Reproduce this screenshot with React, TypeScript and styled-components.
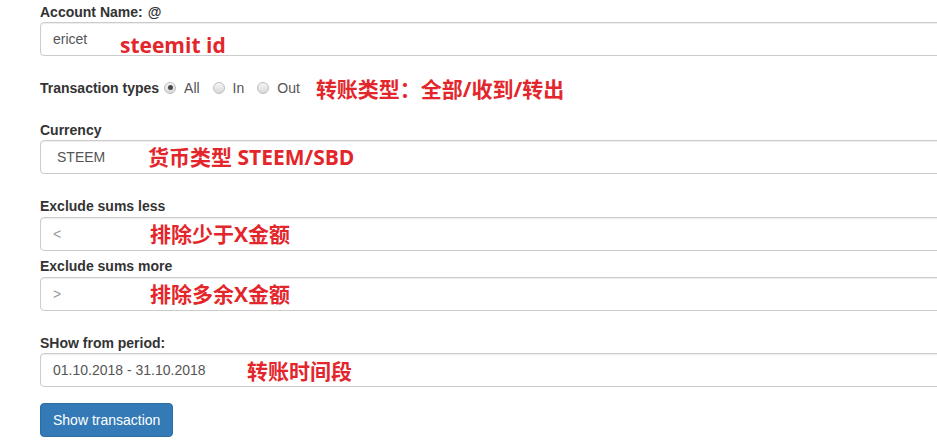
import React from "react";
import styled, { createGlobalStyle } from "styled-components";

const GlobalStyle = createGlobalStyle`
  html, body {
    margin: 0;
    padding: 0;
    background: #fff;
    overflow: hidden;
  }
  body {
    font-family: "Liberation Sans", Arial, sans-serif;
    color: #333;
  }
`;

const Page = styled.form`
  width: 960px;
  box-sizing: border-box;
  padding: 3px 0 0 40px;
  display: flex;
  flex-direction: column;
`;

const Group = styled.div<{ $mt: number }>`
  margin-top: ${(p) => p.$mt}px;
  display: flex;
  flex-direction: column;
`;

const Label = styled.label<{ $mb?: number }>`
  display: block;
  font-size: 14px;
  font-weight: 700;
  line-height: 19px;
  color: #333;
  margin-bottom: ${(p) => p.$mb ?? 0}px;
`;

const At = styled.span`
  margin-left: 5px;
`;

const Field = styled.div`
  position: relative;
`;

const TextInput = styled.input`
  display: block;
  width: 100%;
  height: 34px;
  box-sizing: border-box;
  margin: 0;
  padding: 6px 12px;
  font-family: "Liberation Sans", Arial, sans-serif;
  font-size: 14px;
  line-height: 20px;
  color: #555;
  background: #fff;
  border: 1px solid #ccc;
  border-radius: 4px;
  box-shadow: inset 0 1px 1px rgba(0, 0, 0, 0.075);
  outline: none;
  &::placeholder {
    color: #999;
  }
`;

const Select = styled.select`
  display: block;
  width: 100%;
  height: 34px;
  box-sizing: border-box;
  margin: 0;
  padding: 6px 12px 6px 16px;
  font-family: "Liberation Sans", Arial, sans-serif;
  font-size: 14px;
  line-height: 20px;
  color: #555;
  background: #fff;
  border: 1px solid #ccc;
  border-radius: 4px;
  box-shadow: inset 0 1px 1px rgba(0, 0, 0, 0.075);
  appearance: none;
  outline: none;
`;

const Note = styled.span<{ $left?: number; $top?: number }>`
  position: absolute;
  left: ${(p) => p.$left ?? 0}px;
  top: ${(p) => p.$top ?? 0}px;
  font-family: "Open Sans", "Noto Sans CJK SC", sans-serif;
  font-size: 21px;
  font-weight: 700;
  line-height: 24px;
  color: #e3262b;
  white-space: nowrap;
  pointer-events: none;
`;

const InlineNote = styled.span`
  margin-left: 16px;
  font-family: "Open Sans", "Noto Sans CJK SC", sans-serif;
  font-size: 21px;
  font-weight: 700;
  line-height: 19px;
  color: #e3262b;
  white-space: nowrap;
  position: relative;
  top: 1px;
`;

const RadioRow = styled.div`
  margin-top: 23px;
  height: 19px;
  display: flex;
  align-items: center;
`;

const RowLabel = styled.span`
  font-size: 14px;
  font-weight: 700;
  line-height: 19px;
  color: #333;
`;

const Option = styled.label<{ $first?: boolean }>`
  display: flex;
  align-items: center;
  margin-left: ${(p) => (p.$first ? 5 : 13)}px;
  font-size: 14px;
  line-height: 19px;
  color: #555;
`;

const Radio = styled.input`
  appearance: none;
  width: 12px;
  height: 12px;
  margin: 0 8px 0 0;
  box-sizing: border-box;
  border: 1px solid #bdbdbd;
  border-radius: 50%;
  background: linear-gradient(#f6f6f6, #d9d9d9);
  display: grid;
  place-items: center;
  position: relative;
  top: -1px;
  &:checked::after {
    content: "";
    width: 5px;
    height: 5px;
    border-radius: 50%;
    background: #4a4a4a;
  }
`;

const Button = styled.button`
  align-self: flex-start;
  margin-top: 16px;
  height: 34px;
  padding: 6px 12px;
  box-sizing: border-box;
  font-family: "Liberation Sans", Arial, sans-serif;
  font-size: 14px;
  line-height: 20px;
  color: #fff;
  background: #337ab7;
  border: 1px solid #2e6da4;
  border-radius: 4px;
  cursor: pointer;
`;

export default function App() {
  return (
    <>
      <GlobalStyle />
      <Page onSubmit={(e) => e.preventDefault()}>
        <Group $mt={0}>
          <Label>
            Account Name:<At>@</At>
          </Label>
          <Field>
            <TextInput defaultValue="ericet" />
            <Note $left={80} $top={11}>steemit id</Note>
          </Field>
        </Group>

        <RadioRow>
          <RowLabel>Transaction types</RowLabel>
          <Option $first>
            <Radio type="radio" name="type" defaultChecked />
            All
          </Option>
          <Option>
            <Radio type="radio" name="type" />
            In
          </Option>
          <Option>
            <Radio type="radio" name="type" />
            Out
          </Option>
          <InlineNote>转账类型：全部/收到/转出</InlineNote>
        </RadioRow>

        <Group $mt={23}>
          <Label>Currency</Label>
          <Field>
            <Select defaultValue="STEEM">
              <option value="STEEM">STEEM</option>
              <option value="SBD">SBD</option>
            </Select>
            <Note $left={108} $top={5}>货币类型 STEEM/SBD</Note>
          </Field>
        </Group>

        <Group $mt={23}>
          <Label $mb={1}>Exclude sums less</Label>
          <Field>
            <TextInput placeholder="<" />
            <Note $left={110} $top={5}>排除少于X金额</Note>
          </Field>
        </Group>

        <Group $mt={6}>
          <Label $mb={1}>Exclude sums more</Label>
          <Field>
            <TextInput placeholder=">" />
            <Note $left={110} $top={5}>排除多余X金额</Note>
          </Field>
        </Group>

        <Group $mt={23}>
          <Label>SHow from period:</Label>
          <Field>
            <TextInput defaultValue="01.10.2018 - 31.10.2018" />
            <Note $left={207} $top={6}>转账时间段</Note>
          </Field>
        </Group>

        <Button type="submit">Show transaction</Button>
      </Page>
    </>
  );
}
